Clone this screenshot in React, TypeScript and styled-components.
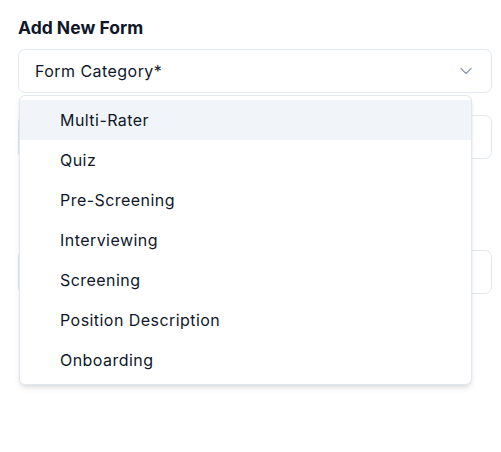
import React from "react"
import styled, { createGlobalStyle } from "styled-components"
import { ChevronDown } from "lucide-react"

const categories = [
	"Multi-Rater",
	"Quiz",
	"Pre-Screening",
	"Interviewing",
	"Screening",
	"Position Description",
	"Onboarding"
]

export default function App() {
	return (
		<>
			<GlobalStyle />
			<Page>
				<Title>Add New Form</Title>
				<Fields>
					<SelectWrap>
						<Trigger>
							<span>Form Category*</span>
							<ChevronDown size={20} strokeWidth={1.5} />
						</Trigger>
						<Menu>
							{categories.map((item, index) => (
								<Option key={item} active={index === 0}>
									{item}
								</Option>
							))}
						</Menu>
					</SelectWrap>
					<Input placeholder="Form Name*" />
					<Spacer />
					<Input placeholder="Description" />
				</Fields>
			</Page>
		</>
	)
}

const GlobalStyle = createGlobalStyle`
	body {
		margin: 0;
		background: #ffffff;
		font-family: Inter, "Noto Sans", sans-serif;
		color: #0f172a;
	}
`
const Page = styled.div`
	padding: 14px 9px 0 18px;
	height: 452px;
	box-sizing: border-box;
`
const Title = styled.h2`
	margin: 0 0 7px;
	font-size: 17.5px;
	line-height: 28px;
	font-weight: 700;
	color: #0f172a;
`
const Fields = styled.div`
	display: flex;
	flex-direction: column;
	gap: 22px;
`
const SelectWrap = styled.div`
	position: relative;
`
const Trigger = styled.div`
	display: flex;
	align-items: center;
	justify-content: space-between;
	height: 44px;
	box-sizing: border-box;
	padding: 0 15px 0 16px;
	border: 1px solid #e2e8f0;
	border-radius: 7px;
	font-size: 16px;
	letter-spacing: 0.45px;
	color: #0f172a;
	svg {
		color: #64748b;
		opacity: 0.7;
	}
`
const Menu = styled.div`
	position: absolute;
	z-index: 10;
	top: 46px;
	left: 1px;
	width: 453px;
	box-sizing: border-box;
	padding: 4px 0;
	background: #ffffff;
	border: 1px solid #e2e8f0;
	border-radius: 6px;
	box-shadow: 0 4px 6px -1px rgba(0, 0, 0, 0.1), 0 2px 4px -2px rgba(0, 0, 0, 0.1);
`
const Option = styled.div<{ active?: boolean }>`
	display: flex;
	align-items: center;
	height: 40px;
	padding-left: 40px;
	font-size: 16px;
	letter-spacing: 0.45px;
	color: #0f172a;
	background: ${(p) => (p.active ? "#f1f5f9" : "transparent")};
`
const Input = styled.input`
	height: 44px;
	box-sizing: border-box;
	padding: 0 16px;
	border: 1px solid #e2e8f0;
	border-radius: 7px;
	font-family: inherit;
	font-size: 16px;
	outline: none;
`
const Spacer = styled.div`
	height: 47px;
`
